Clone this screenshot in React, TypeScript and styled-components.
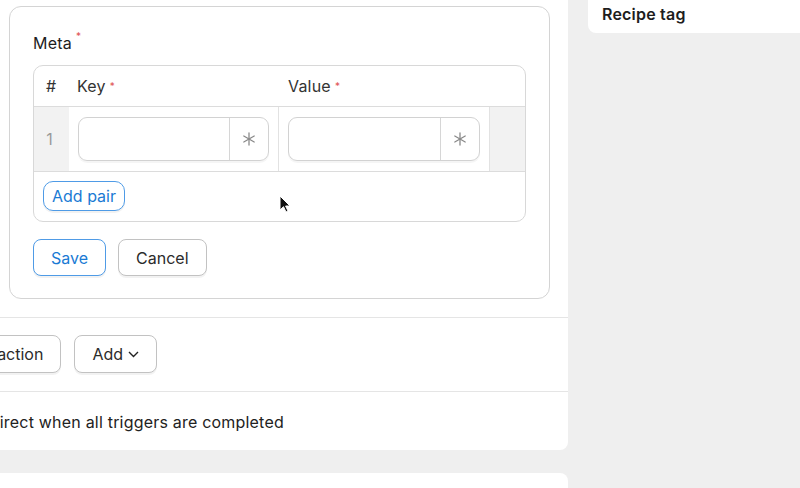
import styled, { createGlobalStyle } from "styled-components";

const GlobalStyle = createGlobalStyle`
	html, body {
		margin: 0;
		padding: 0;
		background: #efefef;
		font-family: Inter, "Noto Sans", "Liberation Sans", sans-serif;
		color: #222222;
		letter-spacing: 0.2px;
	}
	* {
		box-sizing: border-box;
	}
`;

const Page = styled.div`
	position: relative;
	width: 800px;
	height: 488px;
	overflow: hidden;
`;

const Columns = styled.div`
	display: flex;
	align-items: flex-start;
	gap: 20px;
	margin-left: -64px;
`;

const LeftColumn = styled.div`
	display: flex;
	flex-direction: column;
	gap: 23px;
	width: 632px;
	flex-shrink: 0;
`;

const Panel = styled.div`
	background: #ffffff;
	border-radius: 0 0 8px 8px;
`;

const NextPanel = styled.div`
	background: #ffffff;
	border-radius: 8px 8px 0 0;
	height: 60px;
`;

const EditorSection = styled.div`
	padding: 6px 18px 18px 73px;
	border-bottom: 1px solid #e5e5e5;
`;

const MetaCard = styled.div`
	border: 1px solid #d4d4d4;
	border-radius: 12px;
	padding: 25px 23px 22px 23px;
`;

const Label = styled.div`
	font-size: 16px;
	line-height: 22px;
	color: #1d1d1d;
	margin-bottom: 11px;
`;

const Required = styled.sup`
	color: #e05252;
	font-size: 10px;
	margin-left: 4px;
	vertical-align: 9px;
	line-height: 0;
`;

const Table = styled.div`
	border: 1px solid #d8d8d8;
	border-radius: 10px;
	overflow: hidden;
`;

const Row = styled.div`
	display: grid;
	grid-template-columns: 35px 209px 211px 1fr;
	border-bottom: 1px solid #dcdcdc;
`;

const HeaderCell = styled.div<{ $pad?: number }>`
	height: 40px;
	display: flex;
	align-items: center;
	padding-left: ${(p) => p.$pad ?? 8}px;
	font-size: 16px;
	color: #333333;
`;

const IndexCell = styled.div`
	background: #f2f2f2;
	display: flex;
	align-items: center;
	justify-content: center;
	color: #9a9a9a;
	font-size: 16px;
	padding-right: 4px;
`;

const InputCell = styled.div<{ $divider?: boolean }>`
	padding: 10px 9px;
	border-left: ${(p) => (p.$divider ? "1px solid #e2e2e2" : "none")};
`;

const FillerCell = styled.div`
	background: #f2f2f2;
	border-left: 1px solid #e2e2e2;
`;

const InputGroup = styled.div`
	display: flex;
	height: 44px;
	border: 1px solid #d2d2d2;
	border-radius: 9px;
	box-shadow: 0 2px 0 rgba(0, 0, 0, 0.04);
	overflow: hidden;
`;

const TextInput = styled.input`
	flex: 1;
	min-width: 0;
	border: none;
	outline: none;
	background: transparent;
	font: inherit;
	padding: 0 12px;
`;

const Addon = styled.div`
	width: 39px;
	border-left: 1px solid #d6d6d6;
	display: flex;
	align-items: center;
	justify-content: center;
	color: #8a8a8a;
`;

const TableFooter = styled.div`
	padding: 9px 9px 10px 9px;
`;

const Button = styled.button<{ $primary?: boolean; $small?: boolean }>`
	font-family: inherit;
	font-size: 16px;
	letter-spacing: 0;
	height: ${(p) => (p.$small ? 30 : 37)}px;
	padding: 0 ${(p) => (p.$small ? 8 : 17)}px;
	border-radius: ${(p) => (p.$small ? 10 : 8)}px;
	border: 1px solid ${(p) => (p.$primary ? "#4f9be6" : "#c2c2c2")};
	color: ${(p) => (p.$primary ? "#1a7ad4" : "#2b2b2b")};
	background: #ffffff;
	box-shadow: 0 2px 0 rgba(0, 0, 0, 0.05);
	display: inline-flex;
	align-items: center;
	gap: 5px;
	cursor: pointer;
`;

const BarButton = styled(Button)`
	height: 38px;
`;

const Actions = styled.div`
	display: flex;
	gap: 12px;
	margin-top: 17px;
`;

const ActionBar = styled.div`
	display: flex;
	gap: 13px;
	padding: 17px 8px 18px;
	border-bottom: 1px solid #e5e5e5;
`;

const Footer = styled.div`
	height: 58px;
	display: flex;
	align-items: center;
	padding: 2px 0 0 34px;
	font-size: 16px;
	color: #222222;
`;

const RightColumn = styled.div`
	flex: 1;
`;

const TagCard = styled.div`
	background: #ffffff;
	border-radius: 0 0 0 8px;
	height: 33px;
	padding: 4px 14px 0;
	font-size: 16px;
	line-height: 20px;
	font-weight: 600;
	color: #1d1d1d;
`;

const Cursor = styled.svg`
	position: absolute;
	left: 279px;
	top: 195px;
`;

const Asterisk = () => (
	<svg width="14" height="14" viewBox="0 0 14 14" stroke="currentColor" strokeWidth="1.3" strokeLinecap="round">
		<line x1="7" y1="1" x2="7" y2="13" />
		<line x1="1.8" y1="4" x2="12.2" y2="10" />
		<line x1="1.8" y1="10" x2="12.2" y2="4" />
	</svg>
);

const Chevron = () => (
	<svg width="11" height="7" viewBox="0 0 11 7" fill="none" stroke="#222" strokeWidth="1.4">
		<path d="M1 1l4.5 4.5L10 1" />
	</svg>
);

const columns = [
	{ name: "#", pad: 12, required: false },
	{ name: "Key", pad: 8, required: true },
	{ name: "Value", pad: 10, required: true },
	{ name: "", pad: 0, required: false },
];

export default function App() {
	return (
		<Page>
			<GlobalStyle />
			<Columns>
				<LeftColumn>
					<Panel>
						<EditorSection>
							<MetaCard>
								<Label>
									Meta<Required>*</Required>
								</Label>
								<Table>
									<Row>
										{columns.map((col, i) => (
											<HeaderCell key={i} $pad={col.pad}>
												{col.name}
												{col.required && <Required>*</Required>}
											</HeaderCell>
										))}
									</Row>
									<Row>
										<IndexCell>1</IndexCell>
										<InputCell>
											<InputGroup>
												<TextInput />
												<Addon>
													<Asterisk />
												</Addon>
											</InputGroup>
										</InputCell>
										<InputCell $divider>
											<InputGroup>
												<TextInput />
												<Addon>
													<Asterisk />
												</Addon>
											</InputGroup>
										</InputCell>
										<FillerCell />
									</Row>
									<TableFooter>
										<Button $primary $small>
											Add pair
										</Button>
									</TableFooter>
								</Table>
								<Actions>
									<Button $primary>Save</Button>
									<Button>Cancel</Button>
								</Actions>
							</MetaCard>
						</EditorSection>
						<ActionBar>
							<BarButton>Add action</BarButton>
							<BarButton>
								Add <Chevron />
							</BarButton>
						</ActionBar>
						<Footer>Redirect when all triggers are completed</Footer>
					</Panel>
					<NextPanel />
				</LeftColumn>
				<RightColumn>
					<TagCard>Recipe tag</TagCard>
				</RightColumn>
			</Columns>
			<Cursor width="12" height="18" viewBox="0 0 12 18">
				<path d="M1 1v14l3.5-3.3L7 17l2-1-2.4-5H11z" fill="#111" stroke="#fff" strokeWidth="1" />
			</Cursor>
		</Page>
	);
}
